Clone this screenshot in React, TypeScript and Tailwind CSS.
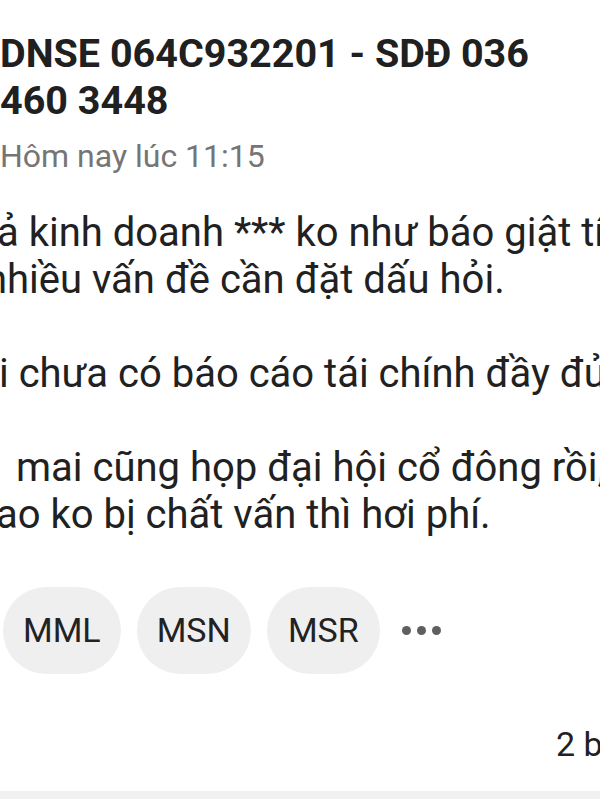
import React from 'react'

const body = [
  { text: 'ả kinh doanh *** ko như báo giật tít', shift: 'ml-[-3px]' },
  { text: 'nhiều vấn đề cần đặt dấu hỏi.', shift: 'ml-[-15px]' },
  { text: '', shift: '' },
  { text: 'i chưa có báo cáo tái chính đầy đủ', shift: 'ml-[-1px]' },
  { text: '', shift: '' },
  { text: 'mai cũng họp đại hội cổ đông rồi,', shift: 'ml-[16px]' },
  { text: 'ao ko bị chất vấn thì hơi phí.', shift: 'ml-[-4px]' },
]

const tags = ['MML', 'MSN', 'MSR']

export default function App() {
  return (
    <div className="w-[600px] h-[800px] overflow-hidden bg-white text-[#212121] font-['Roboto',sans-serif]">
      <div className="pt-[30px]">
        {/* Title */}
        <div className="text-[39.5px] leading-[47px] font-bold text-[#202020] whitespace-nowrap">
          <div>DNSE 064C932201 - SDĐ 036</div>
          <div>460 3448</div>
        </div>

        <div className="mt-[12px] text-[32px] leading-[40px] text-[#757575]">Hôm nay lúc 11:15</div>

        {/* Post body */}
        <div className="mt-[33px] text-[40px] leading-[47px] whitespace-nowrap">
          {body.map((line, i) => (
            <div key={i} className={`h-[47px] ${line.shift}`}>
              {line.text}
            </div>
          ))}
        </div>

        {/* Stock tags */}
        <div className="mt-[49px] ml-[3px] flex items-center gap-[16px]">
          {tags.map((t) => (
            <div
              key={t}
              className="h-[87px] px-[20px] min-w-[113px] flex items-center justify-center rounded-full bg-[#efefef] text-[34px] text-[#222]"
            >
              {t}
            </div>
          ))}
          <div className="ml-[6px] flex items-center gap-[6px]">
            <span className="w-[9px] h-[9px] rounded-full bg-[#5f5f5f]" />
            <span className="w-[9px] h-[9px] rounded-full bg-[#5f5f5f]" />
            <span className="w-[9px] h-[9px] rounded-full bg-[#5f5f5f]" />
          </div>
        </div>

        <div className="mt-[50px] ml-[556px] text-[34px] leading-[40px] whitespace-nowrap">2 bình luận</div>

        <div className="mt-[27px] h-[8px] bg-[#f1f1f1]" />
      </div>
    </div>
  )
}
